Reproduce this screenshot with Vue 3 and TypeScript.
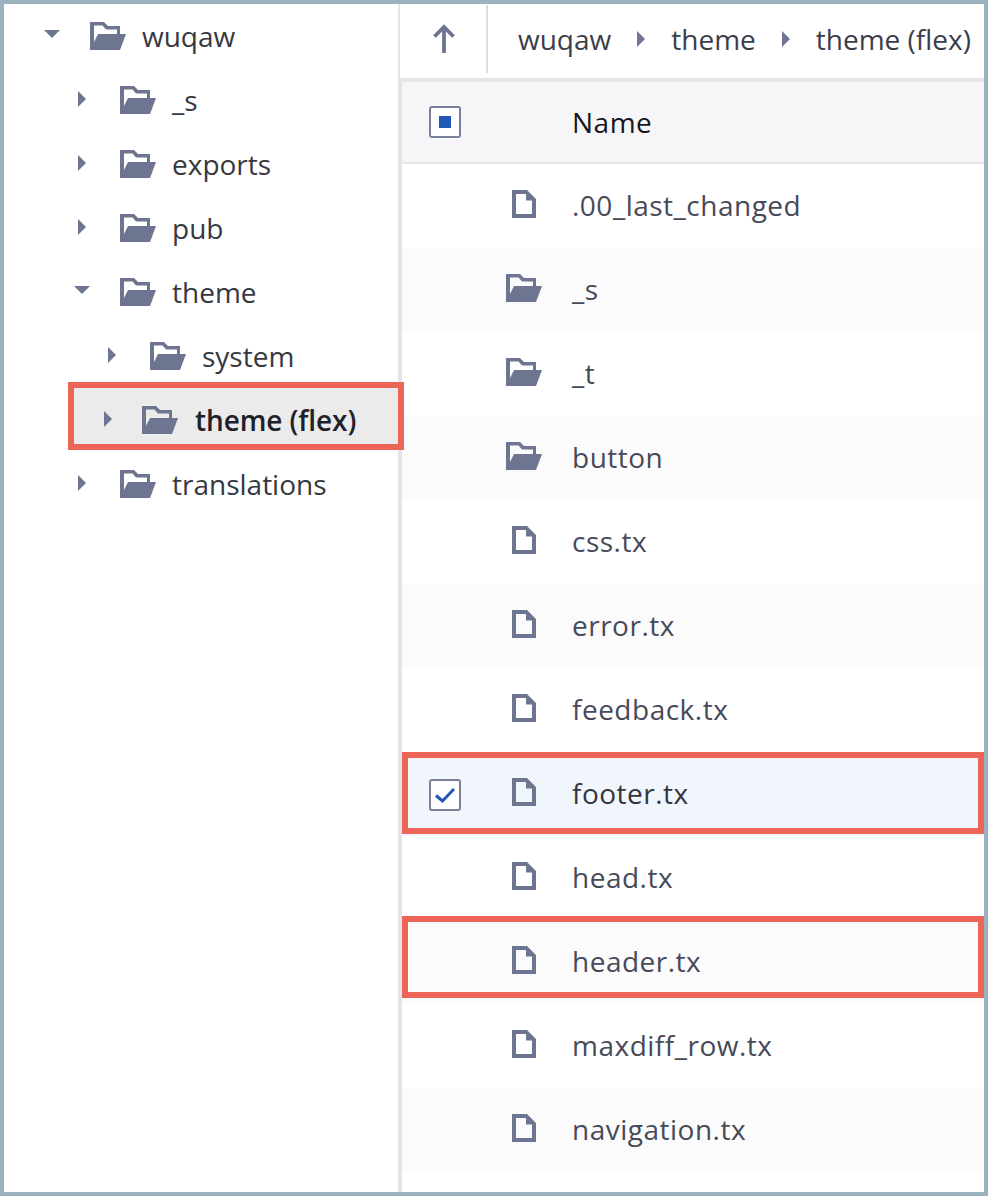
<script setup lang="ts">
interface TreeRow { name: string; depth: number; open: boolean; selected?: boolean }
interface FileRow { name: string; kind: 'file' | 'folder'; checked?: boolean; boxed?: boolean }

const tree: TreeRow[] = [
  { name: 'wuqaw', depth: 0, open: true },
  { name: '_s', depth: 1, open: false },
  { name: 'exports', depth: 1, open: false },
  { name: 'pub', depth: 1, open: false },
  { name: 'theme', depth: 1, open: true },
  { name: 'system', depth: 2, open: false },
  { name: 'theme (flex)', depth: 2, open: false, selected: true },
  { name: 'translations', depth: 1, open: false },
]

const crumbs = ['wuqaw', 'theme', 'theme (flex)']

const files: FileRow[] = [
  { name: '.00_last_changed', kind: 'file' },
  { name: '_s', kind: 'folder' },
  { name: '_t', kind: 'folder' },
  { name: 'button', kind: 'folder' },
  { name: 'css.tx', kind: 'file' },
  { name: 'error.tx', kind: 'file' },
  { name: 'feedback.tx', kind: 'file' },
  { name: 'footer.tx', kind: 'file', checked: true, boxed: true },
  { name: 'head.tx', kind: 'file' },
  { name: 'header.tx', kind: 'file', boxed: true },
  { name: 'maxdiff_row.tx', kind: 'file' },
  { name: 'navigation.tx', kind: 'file' },
]
</script>

<template>
  <div class="frame">
    <aside class="tree">
      <div
        v-for="row in tree"
        :key="row.name"
        class="tree-row"
        :class="['depth-' + row.depth, { selected: row.selected }]"
      >
        <svg v-if="row.open" class="caret-down" viewBox="0 0 16 8"><path d="M0 0H16L8 8Z" /></svg>
        <svg v-else class="caret-right" viewBox="0 0 8 16"><path d="M0 0L8 8L0 16Z" /></svg>
        <svg class="folder" viewBox="0 0 36 28">
          <path fill-rule="evenodd" d="M0 0H14L18 4H30V12H36L30 28H0ZM4 3.5V20L8 12H27V7.5H16L12.5 3.5Z" />
        </svg>
        <span class="tree-name">{{ row.name }}</span>
      </div>
    </aside>

    <main class="pane">
      <header class="toolbar">
        <div class="up">
          <svg viewBox="0 0 24 30" class="up-icon">
            <path d="M12 3V29M2.5 12.5L12 3L21.5 12.5" fill="none" stroke-width="3.8" />
          </svg>
        </div>
        <nav class="crumbs">
          <template v-for="(c, i) in crumbs" :key="c">
            <svg v-if="i > 0" class="caret-right crumb-caret" viewBox="0 0 8 16"><path d="M0 0L8 8L0 16Z" /></svg>
            <span>{{ c }}</span>
          </template>
        </nav>
      </header>

      <div class="head-row">
        <div class="check-cell"><span class="box"><i class="mixed"></i></span></div>
        <span class="head-name">Name</span>
      </div>

      <div
        v-for="(f, i) in files"
        :key="f.name"
        class="file-row"
        :class="{ alt: i % 2 === 1, checked: f.checked }"
      >
        <div class="check-cell">
          <span v-if="f.checked" class="box box-row">
            <svg viewBox="0 0 20 16" class="tick"><path d="M1 8.5L7.5 14L19 2" fill="none" stroke-width="3" /></svg>
          </span>
        </div>
        <div class="icon-cell">
          <svg v-if="f.kind === 'folder'" class="folder" viewBox="0 0 36 28">
            <path fill-rule="evenodd" d="M0 0H14L18 4H30V12H36L30 28H0ZM4 3.5V20L8 12H27V7.5H16L12.5 3.5Z" />
          </svg>
          <svg v-else class="file" viewBox="0 0 24 28">
            <path fill-rule="evenodd" d="M0 0H15L24 9V28H0ZM4 4V24H20V10.5H14V4Z" />
          </svg>
        </div>
        <span class="file-name">{{ f.name }}</span>
        <span v-if="f.boxed" class="annot" :class="{ 'annot-up': !f.checked }"></span>
      </div>
    </main>
  </div>
</template>

<style>
html, body { margin: 0; background: #fff; }
</style>

<style scoped>
.frame {
  box-sizing: border-box;
  width: 988px;
  height: 1196px;
  border: 4px solid #9ab3bf;
  display: flex;
  background: #fff;
  overflow: hidden;
  font-family: "Open Sans", sans-serif;
  font-size: 28px;
  color: #3b3e4a;
}
svg { display: block; flex: none; fill: #6e7591; stroke: #6e7591; stroke-width: 0; }

.tree {
  width: 394px;
  flex: none;
  padding-top: 1px;
  box-sizing: border-box;
}
.tree-row {
  position: relative;
  height: 64px;
  display: flex;
  align-items: center;
  color: #36383f;
}
.tree-name { margin-top: -2px; }
.depth-0 { padding-left: 40px; }
.depth-1 { padding-left: 70px; }
.depth-2 { padding-left: 100px; }
.caret-down { width: 16px; height: 8px; margin-right: 30px; margin-top: -6px; }
.caret-right { width: 8px; height: 16px; }
.tree-row .caret-right { margin-left: 4px; margin-right: 34px; margin-top: -4px; }
.tree-row .folder { margin-right: 16px; margin-top: -2px; }
.folder { width: 36px; height: 28px; }
.file { width: 24px; height: 28px; }

.selected {
  margin-left: 64px;
  margin-right: -6px;
  padding-left: 26px;
  padding-top: 10px;
  height: 68px;
  margin-top: -7px;
  margin-bottom: 3px;
  box-sizing: border-box;
  background: #ebebeb;
  border: 6px solid #ec6557;
  z-index: 2;
  font-weight: 600;
  color: #1f2129;
  letter-spacing: -0.1px;
}
.tree-row.selected .caret-right { margin-right: 30px; }
.tree-row.selected .folder { margin-right: 17px; }

.pane {
  flex: 1;
  min-width: 0;
  border-left: 4px solid #e4e4e6;
}
.toolbar {
  height: 74px;
  border-bottom: 4px solid #e6e6e8;
  margin-left: -2px;
  display: flex;
  align-items: center;
  color: #3b3e4a;
  background: #fff;
}
.up {
  width: 84px;
  height: 68px;
  border-right: 2px solid #dedee0;
  display: flex;
  align-items: center;
  justify-content: center;
  flex: none;
  margin-top: -4px;
  padding-left: 2px;
  box-sizing: content-box;
  margin-right: -1px;
}
.up-icon { width: 24px; height: 30px; fill: none; }
.crumbs {
  display: flex;
  align-items: center;
  padding-left: 31px;
  margin-top: -4px;
  white-space: nowrap;
}
.crumb-caret { margin: 0 26px; }

.head-row {
  height: 80px;
  background: #f6f6f9;
  border-bottom: 2px solid #e6e6e8;
  display: flex;
  align-items: center;
  color: #15171c;
  letter-spacing: 0.5px;
}
.head-name { margin-left: 62px; }
.check-cell {
  width: 108px;
  flex: none;
  padding-left: 27px;
  box-sizing: border-box;
}
.box {
  box-sizing: border-box;
  width: 32px;
  height: 32px;
  border: 2px solid #7a809a;
  border-radius: 3px;
  background: #fff;
  display: flex;
  align-items: center;
  justify-content: center;
}
.box-row { margin-top: 2px; }
.mixed { width: 12px; height: 12px; background: #2059b5; }
.tick { width: 20px; height: 16px; fill: none; stroke: #2059b5; }

.file-row {
  position: relative;
  height: 84px;
  display: flex;
  align-items: center;
  color: #474a59;
  letter-spacing: 0.5px;
}
.alt { background: #fbfbfc; }
.checked { background: #f1f6fd; color: #33353e; }
.icon-cell {
  width: 63px;
  flex: none;
  display: flex;
  justify-content: center;
  margin-top: -4px;
  padding-right: 36px;
  box-sizing: border-box;
}
.file-name { margin-left: -1px; margin-top: -2px; }
.annot {
  position: absolute;
  left: 0;
  right: 0;
  top: 0;
  height: 82px;
  box-sizing: border-box;
  border: 6px solid #ec6557;
}
.annot-up { top: -4px; }
</style>
